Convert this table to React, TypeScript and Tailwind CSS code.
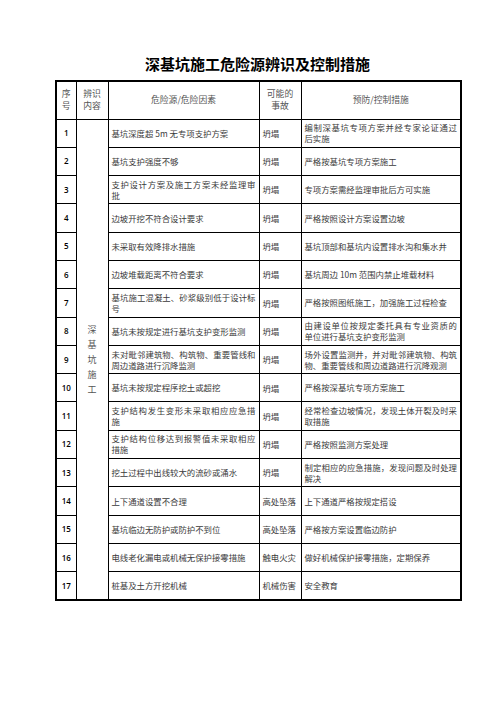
import React from 'react'

type Row = {
  no: number
  hazard: string[]
  accident: string
  measure: string[]
}

const rows: Row[] = [
  { no: 1, hazard: ['基坑深度超 5m 无专项支护方案'], accident: '坍塌', measure: ['编制深基坑专项方案并经专家论证通过', '后实施'] },
  { no: 2, hazard: ['基坑支护强度不够'], accident: '坍塌', measure: ['严格按基坑专项方案施工'] },
  { no: 3, hazard: ['支护设计方案及施工方案未经监理审', '批'], accident: '坍塌', measure: ['专项方案需经监理审批后方可实施'] },
  { no: 4, hazard: ['边坡开挖不符合设计要求'], accident: '坍塌', measure: ['严格按照设计方案设置边坡'] },
  { no: 5, hazard: ['未采取有效降排水措施'], accident: '坍塌', measure: ['基坑顶部和基坑内设置排水沟和集水井'] },
  { no: 6, hazard: ['边坡堆载距离不符合要求'], accident: '坍塌', measure: ['基坑周边 10m 范围内禁止堆载材料'] },
  { no: 7, hazard: ['基坑施工混凝土、砂浆级别低于设计标', '号'], accident: '坍塌', measure: ['严格按照图纸施工，加强施工过程检查'] },
  { no: 8, hazard: ['基坑未按规定进行基坑支护变形监测'], accident: '坍塌', measure: ['由建设单位按规定委托具有专业资质的', '单位进行基坑支护变形监测'] },
  { no: 9, hazard: ['未对毗邻建筑物、构筑物、重要管线和', '周边道路进行沉降监测'], accident: '坍塌', measure: ['场外设置监测井，并对毗邻建筑物、构筑', '物、重要管线和周边道路进行沉降观测'] },
  { no: 10, hazard: ['基坑未按规定程序挖土或超挖'], accident: '坍塌', measure: ['严格按深基坑专项方案施工'] },
  { no: 11, hazard: ['支护结构发生变形未采取相应应急措', '施'], accident: '坍塌', measure: ['经常检查边坡情况，发现土体开裂及时采', '取措施'] },
  { no: 12, hazard: ['支护结构位移达到报警值未采取相应', '措施'], accident: '坍塌', measure: ['严格按照监测方案处理'] },
  { no: 13, hazard: ['挖土过程中出线较大的流砂或涌水'], accident: '坍塌', measure: ['制定相应的应急措施，发现问题及时处理', '解决'] },
  { no: 14, hazard: ['上下通道设置不合理'], accident: '高处坠落', measure: ['上下通道严格按规定搭设'] },
  { no: 15, hazard: ['基坑临边无防护或防护不到位'], accident: '高处坠落', measure: ['严格按方案设置临边防护'] },
  { no: 16, hazard: ['电线老化漏电或机械无保护接零措施'], accident: '触电火灾', measure: ['做好机械保护接零措施，定期保养'] },
  { no: 17, hazard: ['桩基及土方开挖机械'], accident: '机械伤害', measure: ['安全教育'] },
]

function Lines({ lines }: { lines: string[] }) {
  // first line of a wrapped cell is spread to the full width, like Word does
  return (
    <div className="leading-[11px]">
      {lines.map((l, i) => (
        <div
          key={i}
          className={
            lines.length > 1 && i === 0
              ? 'whitespace-nowrap text-justify [text-align-last:justify]'
              : 'whitespace-nowrap'
          }
        >
          {l}
        </div>
      ))}
    </div>
  )
}

export default function App() {
  const cjk = "font-['Noto_Sans_CJK_SC',sans-serif]"
  return (
    <div className={`w-[496px] h-[702px] bg-white text-[#3a3a3a] ${cjk}`}>
      <div className="pt-[54px] ml-[55px] w-[405px]">
        <h1 className="text-center text-[15px] leading-[20px] font-bold text-black mb-[6px]">
          深基坑施工危险源辨识及控制措施
        </h1>
        <table className="w-[405px] table-fixed border-collapse border-2 border-black text-[8.4px] font-normal">
          <colgroup>
            <col className="w-[20px]" />
            <col className="w-[32px]" />
            <col className="w-[151px]" />
            <col className="w-[42px]" />
            <col className="w-[160px]" />
          </colgroup>
          <thead>
            <tr className="h-[38px] text-[8.8px] text-[#555] leading-[12px]">
              <th className="border border-black font-normal text-center">序<br />号</th>
              <th className="border border-black font-normal text-center">辨识<br />内容</th>
              <th className="border border-black font-normal text-center">危险源/危险因素</th>
              <th className="border border-black font-normal text-center">可能的<br />事故</th>
              <th className="border border-black font-normal text-center">预防/控制措施</th>
            </tr>
          </thead>
          <tbody>
            {rows.map((r, idx) => (
              <tr key={r.no} className="h-[28.3px]">
                <td className="border border-black text-center align-middle font-['Open_Sans',sans-serif] font-semibold text-[8px] text-black">
                  {r.no}
                </td>
                {idx === 0 && (
                  <td rowSpan={17} className="border border-black text-center align-middle text-[9px] leading-[15px] text-[#555]">
                    深<br />基<br />坑<br />施<br />工
                  </td>
                )}
                <td className="border border-black px-[3px] align-middle">
                  <Lines lines={r.hazard} />
                </td>
                <td className="border border-black px-[3px] align-middle whitespace-nowrap">
                  {r.accident}
                </td>
                <td className="border border-black px-[3px] align-middle">
                  <Lines lines={r.measure} />
                </td>
              </tr>
            ))}
          </tbody>
        </table>
      </div>
    </div>
  )
}
